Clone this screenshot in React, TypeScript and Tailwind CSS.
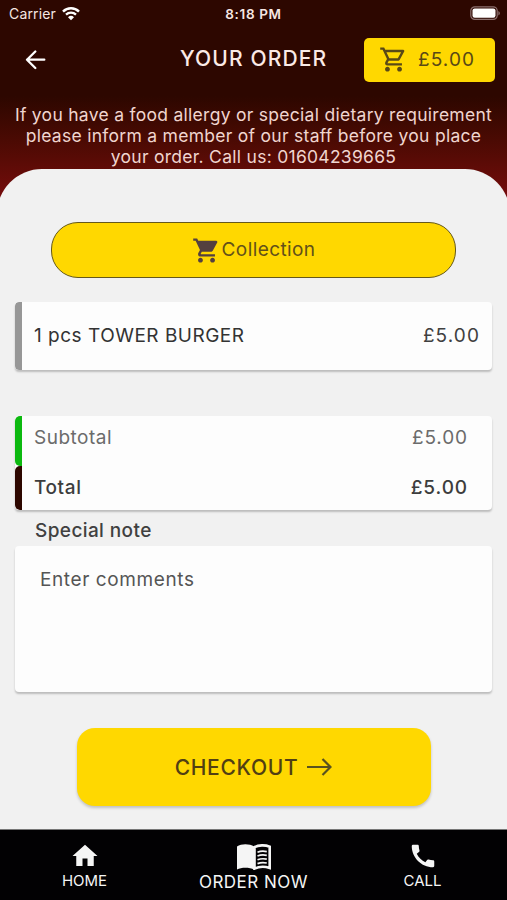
import type { ReactNode } from "react";
import { MdCall, MdHome, MdOutlineShoppingCart, MdShoppingCart } from "react-icons/md";

const order = {
  items: [{ quantity: 1, name: "TOWER BURGER", price: "£5.00" }],
  subtotal: "£5.00",
  total: "£5.00",
};

function StatusBar() {
  return (
    <div className="grid h-[27px] grid-cols-3 items-center pr-[6px] pl-[9px] text-[#f6e6e2]">
      <div className="flex items-center gap-[6px] text-[14px] tracking-[0.15px]">
        <span>Carrier</span>
        <svg width="18" height="14" viewBox="0 0 18 14" fill="none">
          <path d="M1 4.600a11.500 11.500 0 0 1 16 0" stroke="#fff" strokeWidth="2.500" />
          <path d="M4 7.700a7.200 7.200 0 0 1 10 0" stroke="#fff" strokeWidth="2.300" />
          <path d="M9 13.300 6 10.300a4.300 4.300 0 0 1 6 0Z" fill="#fff" />
        </svg>
      </div>
      <span className="pt-px pr-[3px] text-center text-[13.5px] font-semibold tracking-[0.65px]">8:18 PM</span>
      <div className="flex justify-end">
        <svg width="31" height="15" viewBox="0 0 31 15">
          <rect x="0.8" y="0.8" width="26.4" height="12.6" rx="4" fill="none" stroke="#8c706e" strokeWidth="1.2" />
          <rect x="2.5" y="2.4" width="23" height="9.4" rx="2.2" fill="#fff" />
          <path d="M28.4 5v4.4c2-.8 2-3.6 0-4.4Z" fill="#8c706e" />
        </svg>
      </div>
    </div>
  );
}

function Header() {
  return (
    <header className="h-[214px] bg-linear-to-b from-[#2d0700] from-45% to-[#820b10] to-100%">
      <StatusBar />
      <div className="flex h-[65px] items-center pr-3 pl-[25px]">
        <button className="w-[155px]">
          <svg
            width="21"
            height="20"
            viewBox="0 0 21 20"
            fill="none"
            stroke="#fff"
            strokeWidth="2.3"
            strokeLinecap="round"
            strokeLinejoin="round"
          >
            <path d="M19.3 9.7H2M10.3 1.5 2 9.7l8.3 8.3" />
          </svg>
        </button>
        <h1 className="w-[184px] pb-[2px] text-[21px] font-medium tracking-[1.15px] whitespace-nowrap text-[#fbeae6]">
          YOUR ORDER
        </h1>
        <button className="flex h-11 w-[131px] items-center rounded-[5px] bg-[#ffd800] pl-[15px] text-[#594916]">
          <MdOutlineShoppingCart size={29} />
          <span className="ml-[10px] pt-px text-[19px] tracking-[1.1px]">£5.00</span>
        </button>
      </div>
      <p className="mt-[12px] text-center text-[17.5px] leading-[21px] tracking-[0.28px] whitespace-nowrap text-[#f0d5cf]">
        <span className="block">If you have a food allergy or special dietary requirement</span>
        <span className="block">please inform a member of our staff before you place</span>
        <span className="block">your order. Call us: 01604239665</span>
      </p>
    </header>
  );
}

function Summary() {
  return (
    <section className="mt-[46px] overflow-hidden rounded-[4px] bg-[#fdfdfd] shadow-[0_2px_2px_rgba(0,0,0,0.22)]">
      <div className="flex h-[50px]">
        <div className="w-[7px] rounded-l-[5px] bg-[#0cb910]" />
        <div className="flex flex-1 justify-between pt-[10px] pr-6 pl-3 text-[19px] leading-6 tracking-[0.5px] text-[#6b6b6b]">
          <span>Subtotal</span>
          <span className="tracking-[0.9px]">{order.subtotal}</span>
        </div>
      </div>
      <div className="flex h-11">
        <div className="w-[7px] rounded-l-[5px] bg-[#2d0700]" />
        <div className="flex flex-1 justify-between pt-[10px] pr-6 pl-3 text-[19px] leading-6 tracking-[0.6px] text-[#3d3d3d]">
          <span className="font-medium">Total</span>
          <span className="font-medium tracking-[0.9px]">{order.total}</span>
        </div>
      </div>
    </section>
  );
}

// Open book: solid left page, outlined right page with lines of text
function MenuBookIcon() {
  return (
    <svg width="34" height="26" viewBox="0 0 34 26">
      <path d="M0 2.4C4.500-.4 12.500-.4 17.200 2.600v23.100c-4.700-2.400-12.700-2.400-17.200-.2Z" fill="currentColor" />
      <path
        d="M17.500 3.200c4-2.300 10.500-2.500 15.200-.5v21.200c-4.700-1.400-11.200-1.200-15.200.8Z"
        fill="none"
        stroke="currentColor"
        strokeWidth="2.6"
      />
      <path
        d="M20.500 8.200c2.700-1.100 6.200-1.300 9.300-.6M20.500 12c2.700-1.100 6.200-1.300 9.300-.6M20.500 15.800c2.700-1.100 6.200-1.300 9.300-.6M20.500 19.600c2.700-1.100 6.200-1.300 9.300-.6"
        fill="none"
        stroke="currentColor"
        strokeWidth="1.7"
      />
    </svg>
  );
}

function NavItem({ icon, label, className }: { icon: ReactNode; label: string; className: string }) {
  return (
    <button className={`flex flex-col items-center text-[#f5f5f5] ${className}`}>
      {icon}
      <span className="whitespace-nowrap">{label}</span>
    </button>
  );
}

export default function App() {
  return (
    <div className="flex h-[900px] w-[507px] flex-col overflow-hidden bg-[#f1f1f1] font-['Inter','Open_Sans',sans-serif]">
      <Header />

      <main className="-mx-[3px] -mt-[45px] h-[660px] rounded-t-[45px] bg-[#f1f1f1] px-[18px] pt-[53px]">
        {/* Order type */}
        <button className="mx-9 flex h-14 w-[405px] items-center justify-center rounded-[27px] border border-[#65591b] bg-[#ffd800] text-[19px] tracking-[0.4px] text-[#62501a]">
          <MdShoppingCart size={29} color="#54403f" />
          <span className="pt-px pl-px">Collection</span>
        </button>

        {/* Items */}
        {order.items.map((item) => (
          <div
            key={item.name}
            className="mt-6 flex h-[68px] overflow-hidden rounded-[4px] bg-[#fdfdfd] shadow-[0_2px_2px_rgba(0,0,0,0.22)]"
          >
            <div className="w-[7px] rounded-l-[4px] bg-[#979797]" />
            <div className="flex flex-1 items-center justify-between pr-3 pl-3 text-[19px] tracking-[0.5px] text-[#333]">
              <span>
                {item.quantity} pcs {item.name}
              </span>
              <span className="tracking-[1.1px] text-[#404040]">{item.price}</span>
            </div>
          </div>
        ))}

        <Summary />

        {/* Note */}
        <label className="mt-[9px] block pl-5 text-[19px] leading-6 font-medium tracking-[0.4px] text-[#404040]">
          Special note
        </label>
        <div className="mt-[3px] h-[146px] rounded-[4px] bg-[#fdfdfd] px-[25px] pt-[22px] text-[19px] leading-6 tracking-[0.6px] text-[#555] shadow-[0_2px_2px_rgba(0,0,0,0.22)]">
          Enter comments
        </div>

        <button className="mx-auto mt-[36px] flex h-[78px] w-[354px] items-center justify-center gap-[9px] rounded-[18px] bg-[#ffd800] text-[21px] font-medium tracking-[0.7px] text-[#513f13] shadow-[0_2px_3px_rgba(0,0,0,0.2)]">
          <span className="pt-px">CHECKOUT</span>
          <svg width="25" height="18" viewBox="0 0 25 18" fill="none" stroke="#59521f" strokeWidth="2.2">
            <path d="M0 9h23.500M15.500 1l8 8-8 8" />
          </svg>
        </button>
      </main>

      <nav className="flex h-[71px] border-t border-[#777] bg-[#020103]">
        <NavItem className="w-[169px] pt-[11px] text-[15px] leading-5" icon={<MdHome size={30} />} label="HOME" />
        <NavItem
          className="w-[169px] gap-[2px] pt-[14px] text-[17px] leading-5 tracking-[0.5px]"
          icon={<MenuBookIcon />}
          label="ORDER NOW"
        />
        <NavItem className="w-[169px] pt-[11px] text-[15px] leading-5" icon={<MdCall size={30} />} label="CALL" />
      </nav>
    </div>
  );
}
